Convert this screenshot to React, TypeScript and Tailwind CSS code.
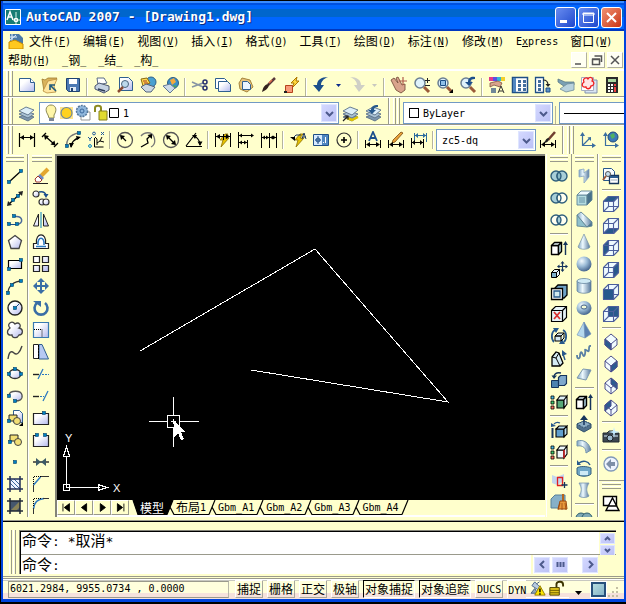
import type { ReactNode } from "react";

const shade = "url(#shade)";
const steel = "url(#steel)";
const ball = "url(#ball)";

function SharedGradients() {
    return (
        <svg className="absolute size-0" aria-hidden="true">
            <defs>
                <linearGradient id="shade" x1="0" y1="0" x2="1" y2="1">
                    <stop offset="0.3" stopColor="#ffffff" />
                    <stop offset="1" stopColor="#b3b9ee" />
                </linearGradient>
                <linearGradient id="steel" x1="0" y1="0" x2="1" y2="0">
                    <stop offset="0" stopColor="#7fa3c2" />
                    <stop offset="0.4" stopColor="#eefaff" />
                    <stop offset="1" stopColor="#56789c" />
                </linearGradient>
                <radialGradient id="ball" cx="0.35" cy="0.3" r="0.7">
                    <stop offset="0" stopColor="#f4fbff" />
                    <stop offset="0.5" stopColor="#9dbdd8" />
                    <stop offset="1" stopColor="#4a6a92" />
                </radialGradient>
            </defs>
        </svg>
    );
}

const nodeDot = (x: number, y: number) => (
    <rect key={`${x}-${y}`} x={x - 1.5} y={y - 1.5} width="3" height="3" fill="#0080c0" stroke="#00406a" strokeWidth="0.6" />
);

const solidCube = (front: string, side: string, top: string) => (
    <g stroke="#000" strokeWidth="1.4" strokeLinejoin="round">
        <path d="M1.500 6.500h7v9h-7z" fill={front} />
        <path d="M1.500 6.500l3-3h7l-3 3z" fill={top} />
        <path d="M8.500 6.500l3-3v9l-3 3z" fill={side} />
    </g>
);

const viewCube = (face: string) => (
    <g stroke="#4c5f9c" strokeWidth="1.1" strokeLinejoin="round">
        <path d="M1.500 6.500L6.500 1.500h10v10l-5 5h-10z" fill="#eefaff" />
        <path d="M6.500 1.500v10h10M6.500 11.500l-5 5" />
        <path d={face} fill="#27598c" />
        <path d="M1.500 6.500h10v10M11.500 6.500l5-5" />
    </g>
);

const isoCube = (faces: string[]) => (
    <g stroke="#4c4f8c" strokeWidth="1" strokeLinejoin="round">
        <path d="M9 1l6 5v6l-6 5-6-5V6z" fill="#f2fcff" />
        {faces.map((face) => (
            <path key={face} d={face} fill="#2a5c90" />
        ))}
        <path d="M3 6l6 5 6-5M9 11v6" />
    </g>
);

const dots = (
    <g stroke="#000" strokeWidth="0.8">
        <path d="M1 3h3v3H1z" fill="#4cc0f0" />
        <path d="M1 8h3v3H1z" fill="#40d070" />
        <path d="M1 13h3v3H1z" fill="#ff7060" />
    </g>
);

const lens = (extra: ReactNode) => (
    <>
        <circle cx="7" cy="7" r="5" fill="#dff2fb" stroke="#6b7f93" strokeWidth="1.5" />
        <path d="M11 11l5 5" stroke="#9b5a3a" strokeWidth="3" />
        {extra}
    </>
);

const stack = (
    <g stroke="#5a7088" strokeWidth="0.9">
        <path d="M1 13l7-3 8 3-6 4z" fill="#7d97ad" />
        <path d="M1 10l7-3 8 3-6 4z" fill="#a9c2d4" />
        <path d="M1 7l7-4 8 3-6 5z" fill="#dceef8" />
    </g>
);

const rings = (left: string, right: string, mid: string) => (
    <g stroke="#2f5f7c" strokeWidth="1.4">
        <circle cx="6" cy="9" r="5" fill={left} />
        <circle cx="12" cy="9" r="5" fill={right} />
        <path d="M9 5a5 5 0 0 1 0 8 5 5 0 0 1 0-8z" fill={mid} />
    </g>
);

const bolt = <path d="M11 3L6 9h3l-2 7 8-9h-4l3-4z" fill="#e8c400" stroke="#8a6d00" strokeWidth="0.8" />;

// witness lines with a dimension line below the symbol
const dimFoot = (
    <>
        <path d="M1.500 9v8M16.500 9v8M3 13.500h12" stroke="#000" />
        <path d="M2 13.500l4-2.500v5zM16 13.500L12 11v5z" fill="#000" />
    </>
);

const icons: Record<string, ReactNode> = {
    // standard
    new: <><path d="M1.500 2.500h11l4 4v9h-15z" fill={shade} stroke="#2f5f90" /><path d="M12.500 2.500v4h4" stroke="#2f5f90" fill="#fff" /></>,
    open: <><path d="M1 3l3 1 3-2h9l-3 4-10 9-1-6z" fill="#d9b35c" stroke="#a07a2c" strokeWidth="0.800" /><path d="M7 5l9-2-3 7 2 6-9 1-4-2z" fill="#ffe6a0" stroke="#b98d3c" strokeWidth="0.800" /><path d="M15 15l-5-5M9 14V9h5" stroke="#1f5a7c" strokeWidth="1.600" /></>,
    save: <><path d="M2.500 2.500h13v13h-11l-2-2z" fill="#4c79b4" stroke="#1e4272" /><path d="M5 3h8v5H5z" fill="#fff" /><path d="M6 11h6v4H6z" fill="#dfe9f5" /><path d="M7 12h2v3H7z" fill="#1e4272" /></>,
    print: <><path d="M5 9L4 2h7l3 5z" fill="#fff" stroke="#5b6c86" /><path d="M2 10l4-3 10 3v4l-5 3-9-4z" fill="#c5d2e2" stroke="#4a5570" /><path d="M5 13l7 2" stroke="#2c3a55" strokeWidth="1.500" /></>,
    preview: <><path d="M3.500 1.500h9l4 4v9h-13z" fill={shade} stroke="#2f5f90" /><circle cx="9" cy="8" r="3.500" fill="#bcd8ec" stroke="#49637c" /><path d="M7 11l-5 5" stroke="#8a4a34" strokeWidth="2.500" /></>,
    publish: <><circle cx="12" cy="6" r="5" fill="#4aa0d0" stroke="#30618a" /><path d="M2 3l6-1 3 5-7 3z" fill="#ffdc4d" stroke="#8c6a10" /><path d="M2 11l5-3 9 3-4 5H7z" fill="#cbd8e4" stroke="#51627c" /><path d="M4 5h4M5 7h4" stroke="#a33a2a" /></>,
    web: <><circle cx="11" cy="7" r="5.500" fill="#3a90c8" stroke="#2b5c84" /><path d="M8 4l4-2 2 4-4 3z" fill="#f4a93c" /><path d="M11 9l4 1-3 2z" fill="#4caf50" /><path d="M1 10l7-2 5 4-5 5z" fill="#cddbe9" stroke="#617795" /></>,
    cut: <><path d="M1 6l11 5M1 11l11-4" stroke="#8795a4" strokeWidth="1.600" /><circle cx="14" cy="6" r="2" stroke="#26306e" strokeWidth="1.500" /><circle cx="14" cy="12" r="2" stroke="#26306e" strokeWidth="1.500" /></>,
    copy: <><path d="M1.500 2.500h9l3 3v7h-12z" fill="#fff" stroke="#2f5f90" /><path d="M4.500 5.500h9l3 3v7h-12z" fill={shade} stroke="#2f5f90" /></>,
    paste: <><path d="M5 2l8 2 3 7-6 5-7-3-1-6z" fill="#e8c47c" stroke="#a5843c" /><path d="M5.500 5.500h5l3 3v5h-8z" fill="#eaf4ff" stroke="#2f5f90" /></>,
    match: <><path d="M15 2l-7 7" stroke="#5a3a3a" strokeWidth="2.500" /><path d="M9 8c0 4-3 6-7 8 1-5 3-8 7-8z" fill="#33221e" /><path d="M12 4l-3 3" stroke="#e06a4a" strokeWidth="1.500" /></>,
    blockEdit: <><path d="M14 1L8 7h3l-2 5 7-7h-3z" fill="#ffd83c" stroke="#ad7600" /><path d="M2.500 9.500h7v7h-7z" fill="#f79a78" stroke="#b4421c" /><path d="M1 15h3v2H1z" fill="#222" /></>,
    undo: <path d="M16 1C9 1 5 4 5 9H1l6 7 5-7H9c0-3 2-6 7-8z" fill="#1c4f8c" />,
    redo: <path d="M2 1c7 0 11 3 11 8h4l-6 7-5-7h3c0-3-2-6-7-8z" fill="#cfcfc6" />,
    pan: <><path d="M1 4l3-2 4 5-2-5 2-1 4 8 3-1v6l-4 3-5-3z" fill="#d9a48c" stroke="#7c5240" strokeWidth="0.900" /><path d="M13 1v8M9 5h8" stroke="#b05a4a" strokeWidth="1.200" /></>,
    zoom: lens(<path d="M14.500 2v5M12 4.500h5M12 9.500h5" stroke="#222" />),
    zoomWindow: lens(<><path d="M4.500 4.500h5v5h-5z" stroke="#1b4e86" fill="#8fc0e8" /><path d="M17 13v4h-4z" fill="#000" /></>),
    zoomPrevious: lens(<path d="M16 1C11 0 9 3 9 6H6l4 4 4-4h-3c0-2 2-3 5-3z" fill="#1c4f8c" />),
    properties: <><path d="M1 1h4v4H1z" fill="#e23a8a" /><path d="M5 1h4v4H5z" fill="#5a50e0" /><path d="M9 1h4v4H9z" fill="#30b4d8" /><path d="M13 1h4v4h-4z" fill="#f2d02a" /><path d="M2 7l8-2 4 2-2 4-6-2-4 2z" fill="#d9a48c" stroke="#7c5240" strokeWidth="0.800" /><path d="M3 12h5v5H3z" fill="#6f8799" /><path d="M10 17l3-7 3 7M11 15h4" stroke="#333" /></>,
    designCenter: <><path d="M1.500 1.500h15v15h-15z" fill="#fff" stroke="#1f4f86" strokeWidth="1.500" /><path d="M2 2h3v14H2z" fill="#4f86c0" /><path d="M7 4h3v3H7zM12 4h3v3h-3zM7 8h3v3H7zM12 8h3v3h-3zM7 12h3v3H7zM12 12h3v3h-3z" fill="#446f9e" /></>,
    toolPalette: <><path d="M1.500 1.500h8v15h-8z" fill="#fff" stroke="#1f4f86" strokeWidth="1.300" /><path d="M4 4h3v3H4zM4 8h3v3H4zM4 12h3v3H4z" fill="#446f9e" /><path d="M9 4c3 0 5 2 5 5" stroke="#222" strokeWidth="1.200" /><path d="M11.500 8h5L14 11z" fill="#222" /><path d="M12 12h4v4h-4z" fill="#5a90c8" stroke="#1f4f86" /></>,
    sheetSet: <><path d="M1 3l7 3h9v3l-9 2-7-5z" fill="#7aa0b4" stroke="#5c7887" strokeWidth="0.800" /><path d="M3 13l7-5 7-1v7l-8 2z" fill="#b9d2de" stroke="#6c8a99" strokeWidth="0.800" /></>,
    markup: <><path d="M5 4h12v13H5z" fill="#d8e4f2" stroke="#8191ac" /><path d="M1.500 1.500h12v13h-12z" fill="#fff" stroke="#a5acc0" /><path d="M4 6c-2-4 3-5 4-3 2-3 6-1 4 2 3 1 2 5-1 5-1 4-5 3-5 1-4 1-5-3-2-5z" stroke="#f02020" strokeWidth="1.300" fill="#ffe6e6" /></>,
    calc: <><path d="M3 1h12v16H3z" fill="#2a2a2a" /><path d="M5 3h8v3H5z" fill="#a9d6a0" /><path d="M5 8h2v2H5zM8 8h2v2H8zM5 11h2v2H5zM8 11h2v2H8zM5 14h2v2H5zM8 14h2v2H8z" fill="#fff" /><path d="M11 8h2v2h-2zM11 11h2v5h-2z" fill="#f04040" /></>,
    // layers
    layers: stack,
    makeCurrent: <>{stack}<path d="M5 14l5 2 6-3" stroke="#e0c400" strokeWidth="2.500" /><path d="M1 17l5-5M2.500 12H6v3.500" stroke="#222" strokeWidth="1.200" /></>,
    layerPrevious: <>{stack}<path d="M13 1C8 1 6 3 6 6H3l4 4 4-4H9c0-2 1-3 4-3z" fill="#27598c" /></>,
    // dimension
    linear: <><path d="M1.500 2v14M16.500 2v14M2 6.500h14" stroke="#000" strokeWidth="1.200" /><path d="M2 6.500L6 4v5zM16 6.500L12 4v5z" fill="#000" /></>,
    aligned: <><path d="M1 6l4-4M13 16l4-4M4 5l9 8" stroke="#000" strokeWidth="1.300" /><path d="M3 4l5 1-4 4zM14.500 14.500l-1-5-4 4z" fill="#000" /></>,
    arcLength: <><path d="M3 15C2 9 6 4 14 2" stroke="#777" strokeWidth="1.500" /><path d="M7 16c0-4 3-8 8-9" stroke="#000" strokeWidth="1.300" /><path d="M17 6l-5-1 1 4zM7 17l-2-5h5z" fill="#000" />{nodeDot(15, 2)}{nodeDot(3, 15)}</>,
    ordinate: <><path d="M7.500 7v9h9M10 14V8l-2-2M10 12l3-2 4 1M13 10l2-4" stroke="#000" /><circle cx="7" cy="2.500" r="1.400" stroke="#1f5a9c" /><path d="M14 1l3 3M17 1l-3 3" stroke="#1f5a9c" /><path d="M1 6l2 2 2-2M3 8v2" stroke="#1f5a9c" /><circle cx="3" cy="15" r="1.400" stroke="#0080c0" /></>,
    radius: <><circle cx="9" cy="9" r="7.500" stroke="#555" strokeWidth="1.300" /><path d="M10 10L5 5" stroke="#000" strokeWidth="1.300" /><path d="M4 4l5 1-4 4z" fill="#000" /></>,
    jogged: <><path d="M2 5C5 1 13 0 15 6s-1 9-3 10" stroke="#777" strokeWidth="1.300" /><path d="M2 16l7-4-1-4 4-4" stroke="#000" strokeWidth="1.300" /><path d="M13 3v5L8.500 4z" fill="#000" /></>,
    diameter: <><circle cx="9" cy="9" r="7.500" stroke="#555" strokeWidth="1.300" /><path d="M5 5l8 8" stroke="#000" strokeWidth="1.300" /><path d="M4 4l5 1-4 4zM14 14l-5-1 4-4z" fill="#000" /></>,
    angular: <><path d="M1 15.500h16M1 15L11 2M9 5c4 2 6 4 6 9" stroke="#000" strokeWidth="1.200" /><path d="M7 4h5l-2 4zM12.500 10.500h5L15 15z" fill="#000" /></>,
    quickDim: <>{bolt}<path d="M1.500 2v14M16.500 2v14M2 5.500h14M9.500 3v6" stroke="#000" /><path d="M2 5.500L6 3v5zM16 5.500L12 3v5z" fill="#000" /></>,
    baseline: <><path d="M1.500 1v16M2 4.500h13M2 11.500h8M10.500 9v8" stroke="#000" /><path d="M2 4.500l3-2v4zM17 4.500l-3-2v4zM2 11.500l3-2v4zM10 11.500l-3-2v4z" fill="#000" /></>,
    continueDim: <><path d="M1.500 2v15M9.500 2v15M16.500 2v15M2 6.500h14" stroke="#000" /><path d="M2 6.500l3-2v4zM9 6.500l-3-2v4zM10 6.500l3-2v4zM16 6.500l-3-2v4z" fill="#000" /></>,
    leader: <>{bolt}<path d="M4 7l3-3h5M13 8l2-6 2 6M14 6h3" stroke="#1f3a60" /><path d="M1 6h5v4z" fill="#000" /></>,
    tolerance: <><path d="M1.500 3.500h15v11h-15z" fill="#d6eaff" stroke="#1f4f86" /><path d="M10 4h6v10h-6z" fill="#4f86c0" /><circle cx="6" cy="9" r="2" stroke="#1f4f86" /><path d="M6 5v8M3 9h6" stroke="#1f4f86" /><path d="M13.500 6v6M11 11.500h1" stroke="#fff" /></>,
    centerMark: <><circle cx="9" cy="9" r="7" stroke="#333" strokeWidth="1.200" /><path d="M9 6v6M6 9h6" stroke="#000" strokeWidth="1.600" /></>,
    dimEdit: <><path d="M5 10l4-9 4 9M6.500 7h5" stroke="#1c4f8c" strokeWidth="1.800" />{dimFoot}</>,
    dimTextEdit: <><path d="M14 1L6 9l-1 3 3-1 8-9z" fill="#e8a23a" stroke="#7a4a10" strokeWidth="0.800" />{dimFoot}</>,
    dimUpdate: <><path d="M4.500 2v8M16.500 2v9M5 4.500h11" stroke="#2b6b9e" /><path d="M5 4.500L8 2v5zM16 4.500L13 2v5z" fill="#2b6b9e" /><path d="M1.500 7v10M13.500 8v9M2 11.500h11" stroke="#000" /><path d="M2 11.500L5 9v5zM13 11.500L10 9v5z" fill="#000" /></>,
    dimStyle: <><path d="M16 1l-7 8" stroke="#704030" strokeWidth="2.500" /><path d="M10 7c0 3-2 5-6 5 3-1 2-5 6-5z" fill="#222" />{dimFoot}</>,
    ucs: <><path d="M3.500 3v11.500h12M3.500 14.500l7-7" stroke="#3a6ea0" strokeWidth="1.200" /><path d="M3.500 1L6 5H1zM17 14.500L13 12v5zM12 6v4L8.500 6.500z" fill="#3a6ea0" /></>,
    ucsWorld: <><path d="M3.500 3v11.500h12" stroke="#3a6ea0" strokeWidth="1.200" /><path d="M3.500 1L6 5H1zM17 14.500L13 12v5z" fill="#3a6ea0" /><circle cx="11" cy="6" r="5" fill="#3b78b8" stroke="#1f4a78" /><path d="M8 4l4-2 1 4-3 2z" fill="#4fb060" /></>,
    // draw
    line: <><path d="M3 15L15 4" stroke="#000" strokeWidth="1.300" />{nodeDot(3, 15)}{nodeDot(15, 4)}</>,
    xline: <><path d="M3 15L15 4" stroke="#000" strokeWidth="1.300" /><path d="M1 17l1-5 4 4zM17 2l-5 1 4 4z" fill="#222" />{nodeDot(7, 11)}{nodeDot(12, 7)}</>,
    polyline: <><path d="M2 13.500h9" stroke="#1c4f8c" /><path d="M11 13.500c7-1 6-9-2-8" stroke="#4a6a9c" strokeWidth="1.500" />{nodeDot(3, 13)}{nodeDot(11, 13)}{nodeDot(8, 5)}</>,
    polygon: <path d="M9 2.500l6.500 5-2.500 8H5l-2.500-8z" fill={shade} stroke="#444" strokeWidth="1.300" />,
    rectangle: <><path d="M2.500 5.500h13v8h-13z" fill={shade} stroke="#000" strokeWidth="1.200" />{nodeDot(3, 14)}{nodeDot(15, 5)}</>,
    arc: <><path d="M2 16C2 9 8 4 16 4" stroke="#333" strokeWidth="1.300" />{nodeDot(2, 16)}{nodeDot(6, 8)}{nodeDot(15, 4)}</>,
    circle: <><circle cx="9" cy="9" r="7" fill={shade} stroke="#222" strokeWidth="1.400" /><path d="M9 9l4-4" stroke="#1c4f8c" />{nodeDot(9, 9)}</>,
    revcloud: <path d="M4 7C0 3 6-1 9 3c4-3 7 2 4 4 5 1 4 7 0 7-2 4-7 3-7 0-5 1-6-4-2-7z" fill={shade} stroke="#444" strokeWidth="1.300" />,
    spline: <path d="M2 16c1-7 3-9 6-6s6-1 8-7" stroke="#444" strokeWidth="1.400" />,
    ellipse: <><ellipse cx="9" cy="9" rx="6" ry="4.500" fill={shade} stroke="#333" strokeWidth="1.300" />{nodeDot(3, 9)}{nodeDot(9, 4)}{nodeDot(15, 9)}</>,
    ellipseArc: <><path d="M3 8c1-5 12-5 13 0s-3 6-7 6" fill={shade} stroke="#555" strokeWidth="1.300" />{nodeDot(3, 9)}{nodeDot(9, 14)}</>,
    insertBlock: <><path d="M7.500 1.500h6l3 3v9h-9z" fill={shade} stroke="#2f5f90" /><path d="M3 6h8v6H3z" fill="#f2df74" stroke="#222" /><circle cx="11" cy="12" r="3.500" fill="#f2df74" stroke="#444" />{nodeDot(3, 12)}<path d="M17 13v4h-4z" fill="#000" /></>,
    makeBlock: <><path d="M4 4h8v6H4z" fill="#f2df74" stroke="#222" /><circle cx="12" cy="11" r="3.500" fill="#f2df74" stroke="#444" />{nodeDot(4, 11)}</>,
    point: nodeDot(9, 9),
    hatch: <><path d="M4 4h10v10H4z" fill="#eef3ff" /><path d="M4 8l6 6M4 4l10 10M8 4l6 6" stroke="#27598c" strokeWidth="0.900" /><path d="M4 1v16M14 1v16M1 4h16M1 14h16" stroke="#222f55" strokeWidth="1.500" /></>,
    gradient: <><path d="M4 4h10v10H4z" fill="#45576e" /><path d="M5 13l9-9v6l-4 4z" fill="#8a8458" /><path d="M4 1v16M14 1v16M1 4h16M1 14h16" stroke="#222a38" strokeWidth="1.500" /></>,
    // modify
    erase: <><path d="M1 16.500h15" stroke="#222" /><path d="M16 2L9 9" stroke="#e3a72e" strokeWidth="4" /><path d="M8 7l4 4-2 2-4-4z" fill="#6a8ac8" /><path d="M6 9l4 4-2 2H4l-1-3z" fill="#fff" stroke="#a03a30" /></>,
    copyObj: <><g fill={shade} stroke="#333" strokeWidth="1.200"><circle cx="4" cy="5" r="3" /><circle cx="10" cy="13" r="3" /><circle cx="14" cy="13" r="3" /></g><path d="M7 3c4-1 6 0 7 3" stroke="#1c4f8c" strokeWidth="1.500" /><path d="M11.500 5h5L14 9z" fill="#1c4f8c" /></>,
    mirror: <><path d="M6.500 3v12h-5zM11.500 3v12h5z" fill={shade} stroke="#222" /><path d="M9 1v16" stroke="#0080c0" /></>,
    offset: <><path d="M1.500 15.500v-5h3C3-1 15-1 13.500 10.500h3v5z" fill="#fff" stroke="#222" strokeWidth="1.200" /><path d="M4 13.500h10M6 12C5 3 13 3 12 12" stroke="#2a78c0" strokeWidth="1.500" /></>,
    array: <g fill={shade} stroke="#222" strokeWidth="1.200"><path d="M1.500 1.500h6v6h-6zM10.500 1.500h6v6h-6zM1.500 10.500h6v6h-6zM10.500 10.500h6v6h-6z" /></g>,
    move: <><path d="M9 3v12M3 9h12" stroke="#3a6ea5" strokeWidth="2" /><path d="M9 1l4 4H5zM9 17l4-4H5zM1 9l4-4v8zM17 9l-4-4v8z" fill="#3a6ea5" /></>,
    rotate: <><path d="M5 4a6.500 6.500 0 1 0 8 0" stroke="#3a6ea5" strokeWidth="2.600" /><path d="M1 2h8v6z" fill="#3a6ea5" /></>,
    scale: <><path d="M1.500 1.500h15v15h-15z" fill={shade} stroke="#3a7ab0" strokeWidth="1.200" /><path d="M2 8.500h8V16" stroke="#000" strokeDasharray="1 1" /></>,
    stretch: <><path d="M7 1.500h3l6.500 14.500H7z" fill="#b7c9f2" stroke="#2f5f90" /><path d="M1.500 1.500h5v14h-5z" fill="#fff" stroke="#222" /><path d="M6.500 2v14" stroke="#000" strokeDasharray="2 1" /></>,
    trim: <><path d="M1 9.500h6" stroke="#222" strokeWidth="1.400" /><path d="M10 9.500h7" stroke="#2a78c0" strokeDasharray="2 1" /><path d="M6 14l5-10" stroke="#2a78c0" strokeWidth="1.300" /></>,
    extend: <><path d="M1 9.500h6" stroke="#222" strokeWidth="1.400" /><path d="M8 9.500h4" stroke="#2a78c0" strokeDasharray="2 1" /><path d="M11 14l5-10" stroke="#2a78c0" strokeWidth="1.300" /></>,
    breakPoint: <><path d="M1.500 4.500h15v11h-15z" fill={shade} stroke="#222" strokeWidth="1.200" />{nodeDot(12, 4)}</>,
    breakTwo: <><path d="M5 4.500H1.500v11h15v-11H13" fill={shade} stroke="#222" strokeWidth="1.200" />{nodeDot(5, 4)}{nodeDot(13, 4)}</>,
    join: <><path d="M1 9h16" stroke="#333" strokeWidth="1.500" /><path d="M4 5l5 4-5 4zM14 5L9 9l5 4z" fill="#3c5a66" /></>,
    chamfer: <><path d="M1.500 10l7-8" stroke="#2a78c0" strokeWidth="1.500" /><path d="M2 1.500h7M1.500 2v8" stroke="#000" strokeDasharray="1 1" /><path d="M1.500 10v7M9 1.500h8" stroke="#333" /></>,
    fillet: <><path d="M1.500 12C2 5 6 2 12 1.500" stroke="#2a78c0" strokeWidth="1.500" /><path d="M2 1.500h7M1.500 2v8" stroke="#000" strokeDasharray="1 1" /><path d="M1.500 11v6M11 1.500h6" stroke="#333" /></>,
    // solid editing
    union: rings("#a8cfd8", "#a8cfd8", "#8bbcc8"),
    subtract: rings("#a8cfd8", "#fffff0", "#fffff0"),
    intersect: rings("#fffff0", "#fffff0", "#a8cfd8"),
    extrudeFace: <>{solidCube("#fff", "#b7d8e2", "#e6f4fa")}<path d="M15.500 16V4" stroke="#16355c" strokeWidth="1.400" /><path d="M15.500 2L18 6h-5z" fill="#16355c" /></>,
    moveFace: <><g stroke="#000"><path d="M1.500 11.500h5v5h-5z" fill="#7fb2cc" /><path d="M1.500 11.500l3-3h5l-3 3zM6.500 11.500l3-3v5l-3 3z" fill="#e6f4fa" /></g><path d="M12.500 2v8M9 5.500h8" stroke="#16355c" strokeWidth="1.200" /><path d="M12.500 0l2 2.500h-4zM12.500 11l2-2.500h-4zM7 5.500l2.500-2v4zM18 5.500l-2.500-2v4z" fill="#16355c" /></>,
    offsetFace: <g stroke="#000" strokeWidth="1.300"><path d="M5 5l3-3h9v10l-3 3H5z" fill="#6fa2c6" /><path d="M1.500 5.500h11v11h-11z" fill="#fff" /><path d="M4 8h6v6H4z" fill="#d0e8f0" stroke="#27598c" /></g>,
    deleteFace: <><g stroke="#000" strokeWidth="1.200"><path d="M1.500 5.500l4-4h11v11l-4 4h-11z" fill="#e6f3f8" /><path d="M1.500 5.500h11v11M12.500 5.500l4-4" /></g><path d="M4 7l6 7M10 7l-6 7" stroke="#d83030" strokeWidth="1.800" /></>,
    rotateFace: <><path d="M5 3C1 5 1 12 4 15M13 3c4 2 4 9 1 12" stroke="#27598c" strokeWidth="1.800" /><path d="M3 1h6L6 6zM15 17H9l3-5z" fill="#27598c" /><path d="M5 9h6v5H5zM5 9l3-3h6l-3 3zM11 14l3-3V6" fill="#d5ebf3" stroke="#000" /></>,
    taperFace: <><path d="M2 8l4-5 3 1 4 10-3 3H2z" fill="#d5ebf3" stroke="#000" strokeWidth="1.300" /><path d="M2 8l4 1 3-5M6 9l4 8" stroke="#000" /><path d="M15 11l-2-6" stroke="#27598c" strokeWidth="1.400" /><path d="M12 1l5 4-5 2z" fill="#27598c" /></>,
    copyFace: <><path d="M1.500 9.500h7v7h-7z" fill="#4d83b0" stroke="#16355c" /><path d="M8.500 6.500l2-2h6v8l-2 2h-6z" fill="#7fa9cc" stroke="#16355c" strokeWidth="1.200" /><path d="M11 2C7 1 5 2 4 5" stroke="#16355c" strokeWidth="1.400" /><path d="M1.500 4.500h5.500L4 8z" fill="#16355c" /></>,
    colorFace: <>{dots}<g stroke="#000" strokeWidth="1.100"><path d="M7 7h7v8H7z" fill="#57a878" /><path d="M7 7l3-4h7l-3 4zM14 7l3-4v8l-3 4z" fill="#dff0f5" /></g></>,
    copyEdge: <><path d="M2.500 7v10" stroke="#16355c" strokeWidth="2" /><g stroke="#000" strokeWidth="1.100"><path d="M6 8h8v8H6z" fill="#5f9fce" /><path d="M6 8l3-3h8l-3 3zM14 8l3-3v8l-3 3z" fill="#b8dcee" /></g><path d="M10 2C8 1 6 1 4 3" stroke="#27598c" strokeWidth="1.300" /><path d="M1 2l5 3-5 1z" fill="#27598c" /></>,
    colorEdge: <>{dots}<g stroke="#000" strokeWidth="1.100"><path d="M7 7h7v8H7z" fill="#eef8fb" /><path d="M7 7l3-4h7l-3 4zM14 7l3-4v8l-3 4z" fill="#eef8fb" /></g><path d="M14 7v8" stroke="#e02020" strokeWidth="1.400" /></>,
    imprint: <><path d="M2 4l5 2 7-3v7l-7 4-5-2z" fill="#c4d6ee" /><path d="M7.500 6.500h5v8h-5z" stroke="#e02020" strokeWidth="1.300" /><path d="M14.500 11v6M11.500 14h6" stroke="#16355c" strokeWidth="1.300" /></>,
    clean: <><path d="M1 6l4-4h10v8l-5 5H1z" fill="#86b0c8" stroke="#56809a" /><path d="M13 1v7" stroke="#b5651d" strokeWidth="2" /><path d="M10 8h6l1 8H8z" fill="#e89a3c" stroke="#9a4a10" /><path d="M8 17l2-7M12 17v-7M16 17l-1-7" stroke="#9a4a10" strokeWidth="0.800" /></>,
    // modeling
    polysolid: <path d="M4 3l5-1v4l5-4v8l-5 6V9l-5 1z" fill={steel} stroke="#86a4c4" strokeWidth="0.800" />,
    box: <g stroke="#5f8496" strokeWidth="0.900"><path d="M2 6h10v10H2z" fill="#b4dce0" /><path d="M2 6l4-4h11l-5 4z" fill="#eefaff" /><path d="M12 6l5-4v9l-5 5z" fill="#47718a" /><path d="M4 8h6v6H4z" fill="#8cb6c2" stroke="none" /></g>,
    wedge: <g stroke="#5f8496" strokeWidth="0.900"><path d="M2 4v11l10 1z" fill="#8fc0cc" /><path d="M2 4l4-3 11 10-5 5z" fill={steel} /><path d="M12 16l5-5v4z" fill="#4d7594" /></g>,
    cone: <path d="M9 1l6 13c-2 3-10 3-12 0z" fill={steel} stroke="#7894a6" strokeWidth="0.700" />,
    sphere: <circle cx="9" cy="9" r="7.500" fill={ball} />,
    cylinder: <g stroke="#5b7c98" strokeWidth="0.700"><path d="M2 4v10c2 3 12 3 14 0V4z" fill={steel} /><ellipse cx="9" cy="4" rx="7" ry="2.500" fill="#cfeaf5" /></g>,
    torus: <><ellipse cx="9" cy="9" rx="7.500" ry="7" fill={ball} /><ellipse cx="9" cy="8" rx="3" ry="2" fill="#f4fbd8" stroke="#41618a" /></>,
    pyramid: <g stroke="#6f90b8" strokeWidth="0.600"><path d="M9 1L2 14l8 3z" fill="#b5d8ee" /><path d="M9 1l1 16 6-4z" fill="#5a80b0" /></g>,
    helix: <path d="M2 12c0 5 3 4 3 1s1-5 2-3 2 5 3 1-1-5 1-4 3 3 3-1 1-3 2-3" stroke="#5a80a4" strokeWidth="1.800" />,
    planar: <path d="M2 13l6-9 8 1-5 10z" fill={steel} stroke="#7b98b0" />,
    extrude: <>{solidCube("#fff", "#a9cbd8", "#e6f4fa")}<path d="M15.500 17V4" stroke="#16355c" strokeWidth="1.500" /><path d="M15.500 1L18 5h-5z" fill="#16355c" /></>,
    pressPull: <><path d="M2 9l7-3 7 3v4l-7 4-7-4z" fill="#50708c" stroke="#30506c" /><path d="M2 9l7-3 7 3-7 4z" fill="#8aacc4" stroke="#30506c" strokeDasharray="2 1" /><path d="M9 10V3" stroke="#16355c" strokeWidth="1.500" /><path d="M9 0l4 5H5z" fill="#16355c" /></>,
    sweep: <path d="M2 4c7-2 12 2 14 9l-5 3C11 11 8 8 2 9z" fill={steel} stroke="#7394ac" />,
    revolve: <><path d="M2 9c2-2 10-2 14 0v6c-3 3-11 3-14 0z" fill="#6fa6c6" stroke="#39627e" /><path d="M5 12h8v4H5z" fill="#cfeaf5" /><path d="M15 6C13 2 8 1 4 4" stroke="#27598c" strokeWidth="1.500" /><path d="M2 1l4 5H2z" fill="#27598c" /></>,
    loft: <path d="M4 2h10c-3 5-3 8 0 13-2 2-8 2-10 0 3-5 3-8 0-13z" fill={steel} stroke="#7b98b0" strokeWidth="0.800" />,
    unionSolid: <><circle cx="6" cy="9" r="5" fill="#7fa9b5" stroke="#2f5f6c" /><circle cx="12" cy="9" r="5" fill="#7fa9b5" stroke="#2f5f6c" /></>,
    // view
    namedViews: <><path d="M1.500 1.500h8l3 3v9h-11z" fill="#f8fcff" stroke="#27598c" /><path d="M7.500 8.500h9v8h-9z" fill="#fff" stroke="#16355c" strokeWidth="1.300" /><path d="M8 9h8v2H8z" fill="#2a5c90" /><circle cx="6" cy="7" r="2.500" fill="#c5e0f0" stroke="#555" /><path d="M4 9l-3 4" stroke="#9b5a3a" strokeWidth="2" /><path d="M9 13h6" stroke="#9ab" /></>,
    top: viewCube("M1.500 6.500L6.500 1.500h10l-5 5z"),
    bottom: viewCube("M1.500 16.500l5-5h10l-5 5z"),
    left: viewCube("M1.500 6.500l5-5v10l-5 5z"),
    right: viewCube("M11.500 6.500l5-5v10l-5 5z"),
    front: viewCube("M1.500 6.500h10v10h-10z"),
    back: viewCube("M6.500 1.500h10v10h-10z"),
    sw: isoCube(["M3 6l6 5v6l-6-5z"]),
    se: isoCube(["M9 11l6-5v6l-6 5z"]),
    ne: isoCube(["M9 1l6 5v6l-6-5z"]),
    nw: isoCube(["M9 1L3 6v6l6-5z"]),
    camera: <><path d="M1 6h4l2-2h4l1 2h5v9H1z" fill="#3c4650" stroke="#20282f" /><path d="M2 8h14v2H2z" fill="#8a9aa8" /><circle cx="8" cy="11" r="3" fill="#9db8cc" stroke="#1a2026" /><path d="M12 0l1 4 5 1-5 1-1 5-1-5-5-1 5-1z" fill="#c5ecff" /></>,
    previousView: <><circle cx="9" cy="9" r="7" fill="#eef4ff" stroke="#8098b8" strokeWidth="1.300" /><path d="M4 9l5-5v3h4v4H9v3z" fill="#7d8fa8" /></>,
    drawOrder: <><path d="M1.500 2.500h13v9h-13z" fill="#fff" stroke="#000" strokeWidth="1.400" /><path d="M4 16.500L10.500 4 17 16.500zM6 12h9" fill="#fff" stroke="#000" strokeWidth="1.400" /></>,
};

function Icon({ name }: { name: string }) {
    return (
        <svg viewBox="0 0 18 18" fill="none" className="size-[18px] shrink-0" aria-hidden="true">
            {icons[name]}
        </svg>
    );
}

function Tool({ name }: { name: string }) {
    return (
        <button type="button" aria-label={name} className="flex h-[22px] w-[23px] shrink-0 items-center pl-[3px]">
            <Icon name={name} />
        </button>
    );
}

function DropArrow({ label, color }: { label: string; color: string }) {
    return (
        <button type="button" aria-label={label} className="flex h-[22px] w-[13px] shrink-0 items-center justify-center">
            <svg viewBox="0 0 5 3" className="h-[3px] w-[5px]" fill={color}>
                <path d="M0 0h5L2.500 3z" />
            </svg>
        </button>
    );
}

function RowTools({ items }: { items: string[] }) {
    return (
        <>
            {items.map((name, index) => {
                if (name === "|") return <div key={index} className="mx-[2px] h-[18px] w-[2px] shrink-0 border-l border-[#b5b59c] border-r border-r-white" />;
                if (name === "v") return <DropArrow key={index} label="Undo list" color="#0a2a8c" />;
                if (name === "w") return <DropArrow key={index} label="Redo list" color="#c8c8c0" />;
                return <Tool key={index} name={name} />;
            })}
        </>
    );
}

function RowGrip() {
    return (
        <div className="flex w-3 shrink-0 gap-px self-stretch pl-[3px]">
            <div className="w-[3px] border-l border-r border-l-white border-r-[#9a9a8c]" />
            <div className="w-[3px] border-l border-r border-l-white border-r-[#9a9a8c]" />
        </div>
    );
}

function ColumnGrip() {
    return (
        <div className="flex h-[11px] shrink-0 flex-col gap-px px-[3px] pt-px">
            <div className="h-[3px] border-t border-b border-t-white border-b-[#9a9a8c]" />
            <div className="h-[3px] border-t border-b border-t-white border-b-[#9a9a8c]" />
        </div>
    );
}

function ColumnTools({ items }: { items: string[] }) {
    return (
        <>
            <ColumnGrip />
            {items.map((name, index) =>
                name === "|" ? (
                    <div key={index} className="mx-[3px] my-[2px] h-[2px] shrink-0 border-t border-b border-t-[#9a9a8c] border-b-white" />
                ) : (
                    <Tool key={index} name={name} />
                )
            )}
        </>
    );
}

function Chevron({ className, d }: { className: string; d: string }) {
    return (
        <span className={`flex shrink-0 items-center justify-center border border-[#dfe6ff] bg-gradient-to-br from-[#d4d8ff] to-[#bcc2f6] ${className}`}>
            <svg viewBox="0 0 9 9" className="size-[9px]" fill="none" stroke="#4d5a8c" strokeWidth="2">
                <path d={d} />
            </svg>
        </span>
    );
}

function Combo({ label, value, className, children }: { label: string; value: string; className: string; children?: ReactNode }) {
    return (
        <div className={`flex h-[22px] shrink-0 items-center border border-[#7199c4] bg-white p-px ${className}`}>
            {children}
            <select aria-label={label} className="h-full min-w-0 flex-1 appearance-none bg-white pl-1 font-['DejaVu_Sans_Mono',monospace] text-[10px] text-black outline-none">
                <option>{value}</option>
            </select>
            <Chevron className="h-full w-4" d="M1 3l3.500 3.500L8 3" />
        </div>
    );
}

const menus = [
    ["文件", "F"],
    ["编辑", "E"],
    ["视图", "V"],
    ["插入", "I"],
    ["格式", "O"],
    ["工具", "T"],
    ["绘图", "D"],
    ["标注", "N"],
    ["修改", "M"],
];

function Latin({ children }: { children: ReactNode }) {
    return <span className="align-[1px] font-['DejaVu_Sans_Mono',monospace] text-[10px] leading-none">{children}</span>;
}

function Menu({ label, hotkey }: { label: string; hotkey: string }) {
    return (
        <button type="button" className="h-[19px] whitespace-nowrap">
            {label}
            <Latin>
                (<u>{hotkey}</u>)
            </Latin>
        </button>
    );
}

function TitleBar() {
    return (
        <header className="flex h-[30px] items-center bg-[linear-gradient(#3a8cff_0_2px,#0050e0_2px_4px,#0066ff_4px_8px,#0066cc_8px_16px,#0066ff_16px_28px,#0038c0_28px)] px-[2px] pt-[2px]">
            <svg viewBox="0 0 16 16" className="size-4 shrink-0" fill="none" aria-hidden="true">
                <path d="M.5.5h15v15H.5z" fill="#177c74" stroke="#fff" />
                <path d="M2 11l3-8 3 8M3 8h4" stroke="#fff" strokeWidth="1.500" />
                <path d="M11 3v12M8 11h7" stroke="#d8f5e8" />
                <path d="M9.500 9.500h3v3h-3z" stroke="#fff" />
            </svg>
            <h1 className="ml-[5px] flex-1 truncate font-['DejaVu_Sans_Mono',monospace] text-[13px] font-bold text-white [text-shadow:1px_1px_0_#0a2a80]">
                AutoCAD 2007 - [Drawing1.dwg]
            </h1>
            <div className="flex gap-[2px]">
                <button type="button" aria-label="Minimize" className="flex size-[21px] items-center justify-center rounded-[3px] border border-white bg-gradient-to-br from-[#6a8cf0] to-[#1e46cc]">
                    <svg viewBox="0 0 13 13" className="size-[13px]"><path d="M1 9h7v3H1z" fill="#fff" /></svg>
                </button>
                <button type="button" aria-label="Maximize" className="flex size-[21px] items-center justify-center rounded-[3px] border border-white bg-gradient-to-br from-[#6a8cf0] to-[#1e46cc]">
                    <svg viewBox="0 0 13 13" className="size-[13px]" fill="none" stroke="#fff"><path d="M1.500 2.500h10v9h-10zM1 2h11v2H1z" /></svg>
                </button>
                <button type="button" aria-label="Close" className="flex size-[21px] items-center justify-center rounded-[3px] border border-white bg-gradient-to-br from-[#f09070] to-[#c8300c]">
                    <svg viewBox="0 0 13 13" className="size-[13px]" stroke="#fff" strokeWidth="2"><path d="M2 2l9 9M11 2l-9 9" /></svg>
                </button>
            </div>
        </header>
    );
}

function MenuBar() {
    const mdi = [
        ["Minimize drawing", "M2 10h6"],
        ["Restore drawing", "M3.500 2h7v6M1.500 5.500h7v5h-7zM1 5h8"],
        ["Close drawing", "M2 2l8 8M10 2l-8 8"],
    ];
    return (
        <nav className="flex flex-wrap items-start gap-x-3 border-b-2 border-white pr-px pl-[5px] text-[12px] leading-[19px]">
            <div className="flex items-center gap-[5px]">
                <svg viewBox="0 0 16 16" className="size-4" fill="none" aria-hidden="true">
                    <path d="M2 1h9l4 4v8H2z" fill="#4a7aa8" />
                    <path d="M1 4h8M4 1v7M1 8l7-6" stroke="#e4f2ff" />
                    <path d="M1 9l6-2 8 4v5H1z" fill="#ffc81e" stroke="#c88a00" />
                </svg>
                <Menu label="文件" hotkey="F" />
            </div>
            {menus.slice(1).map(([label, hotkey]) => (
                <Menu key={hotkey} label={label} hotkey={hotkey} />
            ))}
            <button type="button" className="h-[19px]">
                <Latin>
                    E<u>x</u>press
                </Latin>
            </button>
            <Menu label="窗口" hotkey="W" />
            <Menu label="帮助" hotkey="H" />
            {["钢", "结", "构"].map((label) => (
                <button key={label} type="button" className="h-[19px]">
                    <Latin>_</Latin>
                    {label}
                    <Latin>_</Latin>
                </button>
            ))}
            <div className="ml-auto flex h-[19px] items-center gap-[2px]">
                {mdi.map(([label, d]) => (
                    <button key={label} type="button" aria-label={label} className="flex size-4 items-center justify-center border border-white border-r-[#b0b0a0] border-b-[#b0b0a0] bg-[#fffff2]">
                        <svg viewBox="0 0 12 12" className="size-3" fill="none" stroke="#555" strokeWidth="1.500"><path d={d} /></svg>
                    </button>
                ))}
            </div>
        </nav>
    );
}

function LayerState() {
    return (
        <svg viewBox="0 0 74 18" className="ml-1 h-[18px] w-[74px] shrink-0" fill="none" aria-hidden="true">
            <path d="M3 11C-1 5 2 1 6 1s7 4 3 10v3H4z" fill="#fff6a8" stroke="#8d8a55" />
            <path d="M4 14h5v3H4z" fill="#7c8698" />
            <path d="M15 3h13v12H15z" fill="#ffe48a" />
            <circle cx="21.500" cy="9" r="5.500" fill="#ffd21e" stroke="#6c86a0" strokeWidth="1.200" />
            <path d="M36 8h9v8h-9z" fill="#fff" stroke="#999" />
            <circle cx="37" cy="7" r="5.500" fill="#8fb6dc" stroke="#56789c" strokeDasharray="2 1" strokeWidth="1.500" />
            <circle cx="37" cy="7" r="2" stroke="#3c689c" />
            <path d="M50 8V4c0-3 6-3 6 0v6" stroke="#8c8a20" strokeWidth="2" />
            <path d="M54 7h8v9h-8z" fill="#e0da30" stroke="#85801c" />
            <path d="M64.500 4.500h9v9h-9z" stroke="#000" fill="#fff" />
        </svg>
    );
}

function Toolbars() {
    return (
        <>
            <div className="flex h-[26px] items-end overflow-hidden border-b border-[#9a9a8c]">
                <RowGrip />
                <RowTools items={["new", "open", "save", "|", "print", "preview", "publish", "web", "|", "cut", "copy", "paste", "match", "blockEdit", "|", "undo", "v", "redo", "w", "|", "pan", "zoom", "zoomWindow", "zoomPrevious", "|", "properties", "designCenter", "toolPalette", "sheetSet", "markup", "calc"]} />
            </div>
            <div className="flex h-7 items-end overflow-hidden border-t border-b border-t-white border-b-[#9a9a8c]">
                <RowGrip />
                <Tool name="layers" />
                <Combo label="Layer" value="1" className="ml-px w-[300px]">
                    <LayerState />
                </Combo>
                <Tool name="makeCurrent" />
                <Tool name="layerPrevious" />
                <div className="ml-[3px] w-[2px] shrink-0 self-stretch border-l border-[#9a9a8c] border-r border-r-white" />
                <RowGrip />
                <Combo label="Color" value="ByLayer" className="ml-px w-[150px]">
                    <span className="ml-1 size-[10px] border border-black" />
                </Combo>
                <div className="mx-[2px] h-[18px] w-[2px] shrink-0 border-l border-[#b5b59c]" />
                <div className="flex h-[22px] min-w-0 flex-1 items-center border border-r-0 border-[#7199c4] bg-white pl-1">
                    <button type="button" aria-label="Linetype" className="h-px w-full bg-black" />
                </div>
            </div>
            <div className="flex h-[29px] items-center overflow-hidden border-t border-white">
                <RowGrip />
                <RowTools items={["linear", "aligned", "arcLength", "ordinate", "|", "radius", "jogged", "diameter", "angular", "|", "quickDim", "baseline", "continueDim", "|", "leader", "tolerance", "centerMark", "|", "dimEdit", "dimTextEdit", "dimUpdate", "|"]} />
                <Combo label="Dimension style" value="zc5-dq" className="w-[100px]" />
                <Tool name="dimStyle" />
                <div className="ml-[3px] w-[2px] shrink-0 self-stretch border-l border-[#9a9a8c] border-r border-r-white" />
                <RowGrip />
                <Tool name="ucs" />
                <Tool name="ucsWorld" />
            </div>
        </>
    );
}

function Drawing() {
    return (
        <svg className="block h-0 min-h-full w-full" fill="none" stroke="#fff" shapeRendering="crispEdges">
            <path d="M83 195L258 93l133 153-197-32" />
            <path d="M91.500 265.500h19M122.500 265.500h19M116.500 240.500v19M116.500 271.500v19M110.500 259.500h12v12h-12zM114 265.500h5M116.500 263v5" />
            <path d="M117 265v16l4-4 3 7 3-1-3-7h5z" fill="#fff" stroke="none" />
            <path d="M6.500 328.500h6v6h-6zM9.500 331.500V300M9.500 331.500H43M9.500 291l3 9h-6zM50 331.500l-9 3v-6z" />
            <g fill="#fff" stroke="none" className="font-['Liberation_Sans',sans-serif] text-[11px]">
                <text x="8" y="286">Y</text>
                <text x="56" y="336">X</text>
            </g>
        </svg>
    );
}

const navArrows = [
    ["First tab", "M4.500 3v9M12 3v9L6 7.500z"],
    ["Previous tab", "M11 3v9L5 7.500z"],
    ["Next tab", "M6 3v9l6-4.500z"],
    ["Last tab", "M5 3v9l6-4.500zM12.500 3v9"],
];

function TabEdge({ fill, d }: { fill?: string; d: string }) {
    return (
        <svg viewBox="0 0 12 15" className="h-[15px] w-3 shrink-0" fill="none" aria-hidden="true">
            {fill && <path d={fill} fill="#000" />}
            <path d={d} stroke="#000" strokeWidth="1.200" />
        </svg>
    );
}

function LayoutTabs() {
    const slant = "M9 0L3 14.500M6 7l4 7.500h2M0 14.500h3";
    return (
        <div className="flex h-[17px] items-start border-b-2 border-white text-[12px] leading-[14px]">
            <div className="flex w-[71px] shrink-0">
                {navArrows.map(([label, d]) => (
                    <button key={label} type="button" aria-label={label} className="h-[15px] flex-1 border border-white border-r-[#9a9a8c] border-b-[#9a9a8c]">
                        <svg viewBox="0 0 16 15" className="h-[13px] w-4" fill="#000" stroke="#000"><path d={d} /></svg>
                    </button>
                ))}
            </div>
            <TabEdge fill="M5 0l5 15h2V0z" d="M5 0l5 14.500h2" />
            <button type="button" className="h-[15px] bg-black text-white">模型</button>
            <TabEdge fill="M0 0h9L3 15H0z" d={slant} />
            <button type="button" className="h-[15px] border-b border-black">布局<Latin>1</Latin></button>
            {["Gbm_A1", "Gbm_A2", "Gbm_A3", "Gbm_A4"].map((name) => (
                <div key={name} className="flex">
                    <TabEdge d={slant} />
                    <button type="button" className="h-[15px] border-b border-black"><Latin>{name}</Latin></button>
                </div>
            ))}
            <TabEdge d="M9 0L3 14.500M0 14.500h3" />
        </div>
    );
}

function Workspace() {
    return (
        <main className="flex flex-1">
            <aside className="flex w-[25px] shrink-0 flex-col border-r border-[#9a9a8c]">
                <ColumnTools items={["line", "xline", "polyline", "polygon", "rectangle", "arc", "circle", "revcloud", "spline", "ellipse", "ellipseArc", "insertBlock", "makeBlock", "point", "hatch", "gradient"]} />
            </aside>
            <aside className="flex w-[27px] shrink-0 flex-col border-l border-white">
                <ColumnTools items={["erase", "copyObj", "mirror", "offset", "array", "move", "rotate", "scale", "stretch", "trim", "extend", "breakPoint", "breakTwo", "join", "chamfer", "fillet"]} />
            </aside>
            <section className="flex min-w-0 flex-1 flex-col border-t-2 border-l-2 border-[#848478]">
                <div className="flex-1 bg-black">
                    <Drawing />
                </div>
                <LayoutTabs />
            </section>
            <aside className="ml-px flex w-[26px] shrink-0 flex-col border-r border-l border-l-white border-r-[#9a9a8c]">
                <ColumnTools items={["union", "subtract", "intersect", "|", "extrudeFace", "moveFace", "offsetFace", "deleteFace", "rotateFace", "taperFace", "copyFace", "colorFace", "|", "copyEdge", "colorEdge", "|", "imprint", "clean"]} />
            </aside>
            <aside className="flex w-[26px] shrink-0 flex-col overflow-hidden border-r border-[#9a9a8c] [contain:size]">
                <ColumnTools items={["polysolid", "box", "wedge", "cone", "sphere", "cylinder", "torus", "pyramid", "helix", "planar", "|", "extrude", "pressPull", "sweep", "revolve", "loft", "|", "unionSolid"]} />
            </aside>
            <aside className="flex w-[26px] shrink-0 flex-col border-l border-white">
                <ColumnTools items={["namedViews", "|", "top", "bottom", "left", "right", "front", "back", "|", "sw", "se", "ne", "nw", "|", "camera", "|", "previousView"]} />
                <div className="mt-[5px] border-t border-[#9a9a8c]">
                    <ColumnTools items={["drawOrder"]} />
                </div>
            </aside>
        </main>
    );
}

function CommandWindow() {
    return (
        <section className="mt-[3px] mb-px flex border-t border-b border-[#9a9a8c]">
            <div className="flex flex-1 border-t border-black pt-2 pr-2 pb-[2px] pl-1">
                <div className="mr-[3px] flex w-[9px] shrink-0 gap-px pl-[2px]">
                    <div className="w-[3px] border-r border-l border-r-[#9a9a8c] border-l-white" />
                    <div className="w-[3px] border-r border-l border-r-[#9a9a8c] border-l-white" />
                </div>
                <div className="min-w-0 flex-1 border-t border-l border-[#848478] text-[15px]">
                    <div className="border-t border-l border-black">
                        <div className="flex h-[23px] border-b border-[#9a9a8c] bg-white">
                            <p className="flex-1 pl-px leading-[16px]">
                                命令<span className="font-['DejaVu_Sans_Mono',monospace] text-[13px]">: *</span>取消
                                <span className="font-['DejaVu_Sans_Mono',monospace] text-[13px]">*</span>
                            </p>
                            <div className="flex w-[17px] flex-col gap-px bg-[#ffffcc] p-px">
                                <button type="button" aria-label="Scroll up" className="flex flex-1"><Chevron className="h-full w-full" d="M2 6l2.500-2.500L7 6" /></button>
                                <button type="button" aria-label="Scroll down" className="flex flex-1"><Chevron className="h-full w-full" d="M2 3l2.500 2.500L7 3" /></button>
                            </div>
                        </div>
                        <div className="flex h-[19px] items-center bg-white">
                            <label htmlFor="command" className="pl-px leading-[18px] whitespace-nowrap">
                                命令<span className="font-['DejaVu_Sans_Mono',monospace] text-[13px]">:</span>
                            </label>
                            <input id="command" type="text" className="h-full min-w-0 flex-1 bg-white px-1 font-['DejaVu_Sans_Mono',monospace] text-[13px] outline-none" />
                            <div className="flex h-full w-[67px] items-center gap-[2px] border-l-2 border-[#ffffcc] pl-px">
                                <button type="button" aria-label="Scroll left"><Chevron className="size-4" d="M6 1L2.500 4.500 6 8" /></button>
                                <Chevron className="size-4 text-white" d="M1.500 2v5M4.500 2v5M7.500 2v5" />
                                <button type="button" aria-label="Scroll right" className="ml-auto"><Chevron className="size-4" d="M3 1l3.500 3.500L3 8" /></button>
                            </div>
                            <div className="h-full w-[18px] bg-[#ffffcc]" />
                        </div>
                    </div>
                </div>
            </div>
        </section>
    );
}

const toggles = [
    { label: "捕捉", on: false },
    { label: "栅格", on: false },
    { label: "正交", on: false },
    { label: "极轴", on: false },
    { label: "对象捕捉", on: true },
    { label: "对象追踪", on: true },
];

const raised = "h-[18px] shrink-0 border border-white border-r-[#a8a89c] border-b-[#a8a89c] px-px";
const pressed = "h-[18px] shrink-0 border border-black border-r-white border-b-white px-px";

function StatusBar() {
    return (
        <footer className="flex h-[21px] items-center border-t border-[#9a9a8c] bg-[linear-gradient(#fff_0_1px,#c8c8c0_1px_2px,#ffffdc_2px_14px,#f6e2dc_14px)] pr-1 pl-[5px] text-[12px] leading-4">
            <div className="flex h-[17px] w-[221px] shrink-0 items-center border border-[#9a9a8c] border-r-[#b8b8a8] pl-px whitespace-pre">
                <Latin>6021.2984, 9955.0734 , 0.0000</Latin>
            </div>
            <div className="ml-[6px] flex shrink-0 gap-1">
                {toggles.map(({ label, on }) => (
                    <button key={label} type="button" aria-pressed={on} className={on ? pressed : raised}>
                        {label}
                    </button>
                ))}
                <button type="button" className={raised}><Latin>DUCS</Latin></button>
                <button type="button" className="h-[18px] border-t border-l border-white"><Latin>DYN</Latin></button>
            </div>
            <svg viewBox="0 0 43 18" className="h-[18px] w-[43px] shrink-0 border-b border-white" fill="none" aria-hidden="true">
                <path d="M5 6l3-4 7 7-4 1z" fill="#b8cce0" stroke="#4a668c" />
                <path d="M8 9l-4 5h7zM10 4l3-2" fill="#93a7b8" stroke="#425e80" />
                <path d="M13.500 6L19 16H8z" fill="#ffe600" stroke="#947c00" />
                <path d="M13.500 9v4M13.500 14v1.500" stroke="#000" strokeWidth="1.500" />
                <path d="M31 8V4c1-3 7-3 7 1v2" stroke="#3c3400" strokeWidth="2" />
                <path d="M24 8h10v8H24z" fill="#e0c41c" stroke="#4a4000" />
                <path d="M24 11h10M24 13.500h10" stroke="#6c5c00" />
            </svg>
            <button type="button" aria-label="Status bar menu" className="ml-1 flex h-full w-4 items-end pb-1 pl-[2px]">
                <svg viewBox="0 0 7 4" className="h-1 w-[7px]"><path d="M0 0h7L3.500 4z" fill="#000" /></svg>
            </button>
            <button type="button" aria-label="Clean screen" className="ml-[2px] size-[15px] shrink-0 border-2 border-[#27507c] bg-gradient-to-br from-[#b5dce0] to-[#86b4c8] outline outline-white" />
            <svg viewBox="0 0 12 12" className="ml-auto size-3 shrink-0 self-end" aria-hidden="true">
                <path d="M8 0h2v2H8zM4 4h2v2H4zM8 4h2v2H8zM0 8h2v2H0zM4 8h2v2H4zM8 8h2v2H8z" fill="#c4c0a4" />
            </svg>
        </footer>
    );
}

export default function App() {
    return (
        <div className="flex min-h-screen flex-col border-t border-b-2 border-l border-black bg-[#ffffcc] font-['Noto_Sans_CJK_SC',sans-serif] text-black">
            <SharedGradients />
            <div className="flex flex-1 flex-col border-r-2 border-b-3 border-l-2 border-[#0044dd]">
                <TitleBar />
                <MenuBar />
                <Toolbars />
                <Workspace />
                <CommandWindow />
                <StatusBar />
            </div>
        </div>
    );
}
